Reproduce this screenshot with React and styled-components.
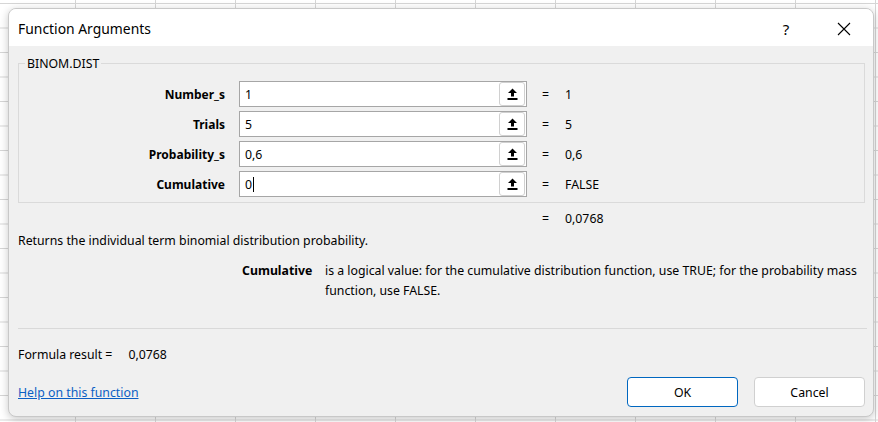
import React from 'react'
import styled, { createGlobalStyle } from 'styled-components'

const GlobalStyle = createGlobalStyle`
  html, body {
    margin: 0;
    padding: 0;
  }
  body {
    width: 878px;
    height: 422px;
    overflow: hidden;
    font-family: 'Noto Sans', 'Open Sans', sans-serif;
    background-color: #ffffff;
    background-image:
      linear-gradient(to right, #d6d6d6 1px, transparent 1px),
      linear-gradient(to bottom, #d6d6d6 1px, transparent 1px);
    background-size: 80px 100%, 100% 24.5px;
    background-position: 75px 0, 0 3px;
  }
`

const args = [
  { name: 'Number_s', input: '1', value: '1' },
  { name: 'Trials', input: '5', value: '5' },
  { name: 'Probability_s', input: '0,6', value: '0,6' },
  { name: 'Cumulative', input: '0', value: 'FALSE', focused: true },
]

const Page = styled.div`
  box-sizing: border-box;
  width: 878px;
  height: 422px;
  padding: 8px 4px 5px 8px;
`

const Dialog = styled.div`
  box-sizing: border-box;
  width: 866px;
  height: 409px;
  background: #f0f0f0;
  border: 1px solid #c8c8c8;
  border-radius: 8px;
  box-shadow: 0 2px 8px rgba(0, 0, 0, 0.22);
  overflow: hidden;
  display: flex;
  flex-direction: column;
  color: #000;
  font-size: 12.3px;
`

const TitleBar = styled.div`
  height: 37px;
  background: #ffffff;
  display: flex;
  align-items: center;
  padding-left: 9px;
  flex-shrink: 0;
`

const Title = styled.div`
  flex: 1;
  font-size: 13.9px;
  padding-top: 2px;
`

const TitleButton = styled.div`
  width: ${(p) => p.$w}px;
  margin-left: ${(p) => p.$gap || 0}px;
  display: flex;
  align-items: center;
  justify-content: center;
  font-size: 15px;
  padding-top: 2px;
`

const Body = styled.div`
  flex: 1;
  display: flex;
  flex-direction: column;
  padding: 0 8px 0 9px;
`

const Group = styled.fieldset`
  margin: 10px 0 0 0;
  padding: 0 0 5px 0;
  height: 147px;
  box-sizing: border-box;
  border: 1px solid #dadada;
  display: flex;
  flex-direction: column;
  gap: 4px;
`

const Legend = styled.legend`
  margin-left: 6px;
  padding: 0 2px;
  font-size: 12.3px;
  line-height: 14px;
  position: relative;
  top: 1px;
`

const ArgRow = styled.div`
  display: flex;
  align-items: center;
  height: 26px;
  &:first-of-type {
    margin-top: 11px;
  }
`

const ArgLabel = styled.div`
  width: 206px;
  text-align: right;
  font-weight: 700;
  font-size: 12px;
`

const InputBox = styled.div`
  box-sizing: border-box;
  margin-left: 14px;
  width: 288px;
  height: 26px;
  background: #ffffff;
  border: 1px solid #a6a6a6;
  display: flex;
  align-items: center;
  padding: 0 1px 0 5px;
`

const InputText = styled.div`
  flex: 1;
  display: flex;
  align-items: center;
`

const Caret = styled.span`
  display: inline-block;
  width: 1px;
  height: 15px;
  background: #000;
  margin-left: 1px;
`

const RefButton = styled.div`
  box-sizing: border-box;
  width: 26px;
  height: 24px;
  background: #ffffff;
  border: 1px solid #d0d0d0;
  border-radius: 3px;
  display: flex;
  align-items: center;
  justify-content: center;
`

const Eq = styled.div`
  margin-left: 15px;
  width: 8px;
`

const EqValue = styled.div`
  margin-left: 15px;
`

const ResultRow = styled.div`
  display: flex;
  align-items: center;
  height: 18px;
  margin-top: 6px;
  padding-left: 509px;
`

const Description = styled.div`
  margin-top: 5px;
  height: 18px;
  line-height: 18px;
`

const ArgHelp = styled.div`
  display: flex;
  margin-top: 11px;
  padding-left: 224px;
  line-height: 20px;
`

const ArgHelpName = styled.div`
  font-weight: 700;
  width: 83px;
  flex-shrink: 0;
`

const ArgHelpText = styled.div`
  flex: 1;
`

const Separator = styled.div`
  margin-top: 27px;
  height: 1px;
  background: #d9d9d9;
  margin-right: -2px;
`

const FormulaResult = styled.div`
  margin-top: 17px;
  display: flex;
  gap: 16px;
  line-height: 18px;
`

const Footer = styled.div`
  margin-top: 13px;
  display: flex;
  align-items: center;
`

const HelpLink = styled.a`
  flex: 1;
  color: #0b5fc4;
  text-decoration: underline;
  cursor: pointer;
`

const Button = styled.button`
  box-sizing: border-box;
  width: 111px;
  height: 30px;
  margin-left: ${(p) => p.$gap}px;
  background: #ffffff;
  border: 1px solid ${(p) => (p.$primary ? '#0067c0' : '#d0d0d0')};
  border-radius: 4px;
  font-family: inherit;
  font-size: 12.3px;
  color: #000;
`

const RefIcon = () => (
  <svg width='11' height='12' viewBox='0 0 11 12'>
    <path d='M5.5 0.5 L10 5 L7 5 L7 8.5 L4 8.5 L4 5 L1 5 Z' fill='#000' />
    <rect x='0.5' y='10' width='10' height='2' fill='#000' />
  </svg>
)

const CloseIcon = () => (
  <svg width='14' height='14' viewBox='0 0 14 14'>
    <path d='M1 1 L13 13 M13 1 L1 13' stroke='#000' strokeWidth='1.1' />
  </svg>
)

const App = () => {
  return (
    <Page>
      <GlobalStyle />
      <Dialog>
        <TitleBar>
          <Title>Function Arguments</Title>
          <TitleButton $w={20}>?</TitleButton>
          <TitleButton $w={58} $gap={19}>
            <CloseIcon />
          </TitleButton>
        </TitleBar>
        <Body>
          <Group>
            <Legend>BINOM.DIST</Legend>
            {args.map((arg) => (
              <ArgRow key={arg.name}>
                <ArgLabel>{arg.name}</ArgLabel>
                <InputBox>
                  <InputText>
                    {arg.input}
                    {arg.focused && <Caret />}
                  </InputText>
                  <RefButton>
                    <RefIcon />
                  </RefButton>
                </InputBox>
                <Eq>=</Eq>
                <EqValue>{arg.value}</EqValue>
              </ArgRow>
            ))}
          </Group>
          <ResultRow>
            <Eq>=</Eq>
            <EqValue>0,0768</EqValue>
          </ResultRow>
          <Description>
            Returns the individual term binomial distribution probability.
          </Description>
          <ArgHelp>
            <ArgHelpName>Cumulative</ArgHelpName>
            <ArgHelpText>
              is a logical value: for the cumulative distribution function, use
              TRUE; for the probability mass function, use FALSE.
            </ArgHelpText>
          </ArgHelp>
          <Separator />
          <FormulaResult>
            <span>Formula result =</span>
            <span>0,0768</span>
          </FormulaResult>
          <Footer>
            <HelpLink>Help on this function</HelpLink>
            <Button $primary $gap={0}>OK</Button>
            <Button $gap={16}>Cancel</Button>
          </Footer>
        </Body>
      </Dialog>
    </Page>
  )
}

export default App
